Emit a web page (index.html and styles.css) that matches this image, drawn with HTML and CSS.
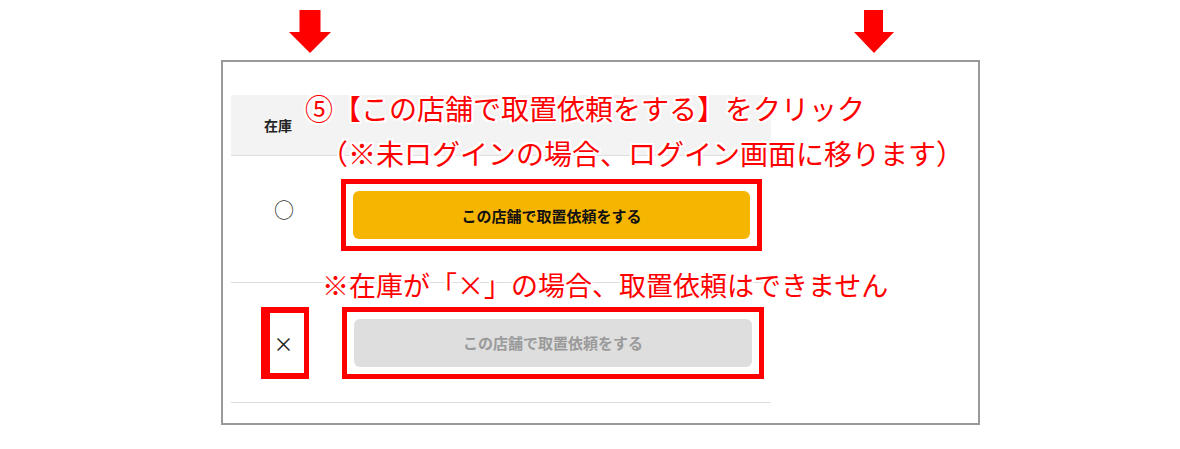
FILE: index.html
```html
<!DOCTYPE html>
<html lang="ja">
<head>
  <meta charset="UTF-8" />
  <meta name="viewport" content="width=device-width, initial-scale=1.0" />
  <title>取置依頼の手順</title>
  <link rel="stylesheet" href="styles.css">
</head>
<body>
  <div class="stage">
    <svg class="arrow arrow-left" width="42" height="43" viewBox="0 0 42 43"><polygon points="10.5,0 31.5,0 31.5,22 42,22 21,43 0,22 10.5,22" fill="#ff0000"/></svg>
    <svg class="arrow arrow-right" width="40" height="43" viewBox="0 0 40 43"><polygon points="10,0 29,0 29,22 40,22 20,43 0,22 10,22" fill="#ff0000"/></svg>

    <div class="frame">
      <div class="stock-table">
        <div class="row head">
          <div class="cell stock"><span class="head-label">在庫</span></div>
          <div class="cell action"></div>
        </div>
        <div class="row first">
          <div class="cell stock"><span class="mark-ok">○</span></div>
          <div class="cell action">
            <span class="mark-box"><button class="btn btn-on">この店舗で取置依頼をする</button></span>
          </div>
        </div>
        <div class="row second">
          <div class="cell stock"><span class="mark-ng">×</span></div>
          <div class="cell action">
            <span class="mark-box"><button class="btn btn-off" disabled>この店舗で取置依頼をする</button></span>
          </div>
        </div>
      </div>
    </div>

    <!-- annotations -->
    <p class="note note-1">⑤【この店舗で取置依頼をする】をクリック</p>
    <p class="note note-2">（※未ログインの場合、ログイン画面に移ります）</p>
    <p class="note note-3">※在庫が「×」の場合、取置依頼はできません</p>
  </div>
</body>
</html>
```

FILE: styles.css
```css
body {
  margin: 0;
  background: #fff;
  font-family: "Noto Sans CJK JP", "Noto Sans", sans-serif;
}
.stage {
  position: relative;
  width: 1180px;
  height: 449px;
  padding-top: 60px;
  box-sizing: border-box;
}
.arrow {
  position: absolute;
  top: 10px;
}
.arrow-left {
  left: 289px;
}
.arrow-right {
  left: 854px;
}
.frame {
  margin-left: 221px;
  width: 759px;
  height: 365px;
  box-sizing: border-box;
  border: 2px solid #999;
  padding: 33px 0 0 8px;
}
.stock-table {
  width: 540px;
}
.row {
  display: flex;
  align-items: center;
  box-sizing: border-box;
  border-bottom: 1px solid #dedede;
}
.row.head {
  height: 61px;
  background: #f3f3f3;
}
.row.first {
  height: 127px;
  padding-bottom: 8px;
}
.row.second {
  height: 120px;
}
.cell.stock {
  width: 106px;
  display: flex;
  justify-content: center;
}
.cell.action {
  flex: 1;
  padding-left: 4px;
}
.head-label {
  font-size: 14px;
  font-weight: bold;
  color: #222;
  margin-right: 12px;
}
.mark-ok {
  font-size: 20px;
  line-height: 1;
  color: #333;
  margin-bottom: 10px;
}
.mark-ng {
  display: inline-block;
  width: 27px;
  height: 60px;
  padding-right: 7px;
  border: 6px solid #ff0000;
  border-left-width: 9px;
  border-right-width: 5px;
  text-align: center;
  line-height: 62px;
  font-size: 20px;
  color: #222;
  margin-left: 2px;
}
.mark-box {
  display: inline-block;
  border: 5px solid #ff0000;
  padding: 7px;
}
.btn {
  display: block;
  width: 397px;
  height: 48px;
  border: none;
  border-radius: 6px;
  font-family: inherit;
  font-size: 15px;
  font-weight: bold;
}
.btn-on {
  background: #f6b500;
  color: #111;
}
.btn-off {
  background: #dedede;
  color: #9a9a9a;
}
.second .mark-box {
  margin-left: 1px;
}
.second .btn {
  width: 398px;
}
.note {
  position: absolute;
  margin: 0;
  font-size: 28px;
  line-height: 36px;
  color: #ff0000;
  white-space: nowrap;
  text-shadow: 2px 0 0 #fff, -2px 0 0 #fff, 0 2px 0 #fff, 0 -2px 0 #fff,
    2px 2px 0 #fff, -2px -2px 0 #fff, 2px -2px 0 #fff, -2px 2px 0 #fff;
}
.note-1 {
  left: 305px;
  top: 90px;
}
.note-2 {
  left: 320px;
  top: 135px;
}
.note-3 {
  left: 322px;
  top: 267px;
  font-size: 27px;
}
```
